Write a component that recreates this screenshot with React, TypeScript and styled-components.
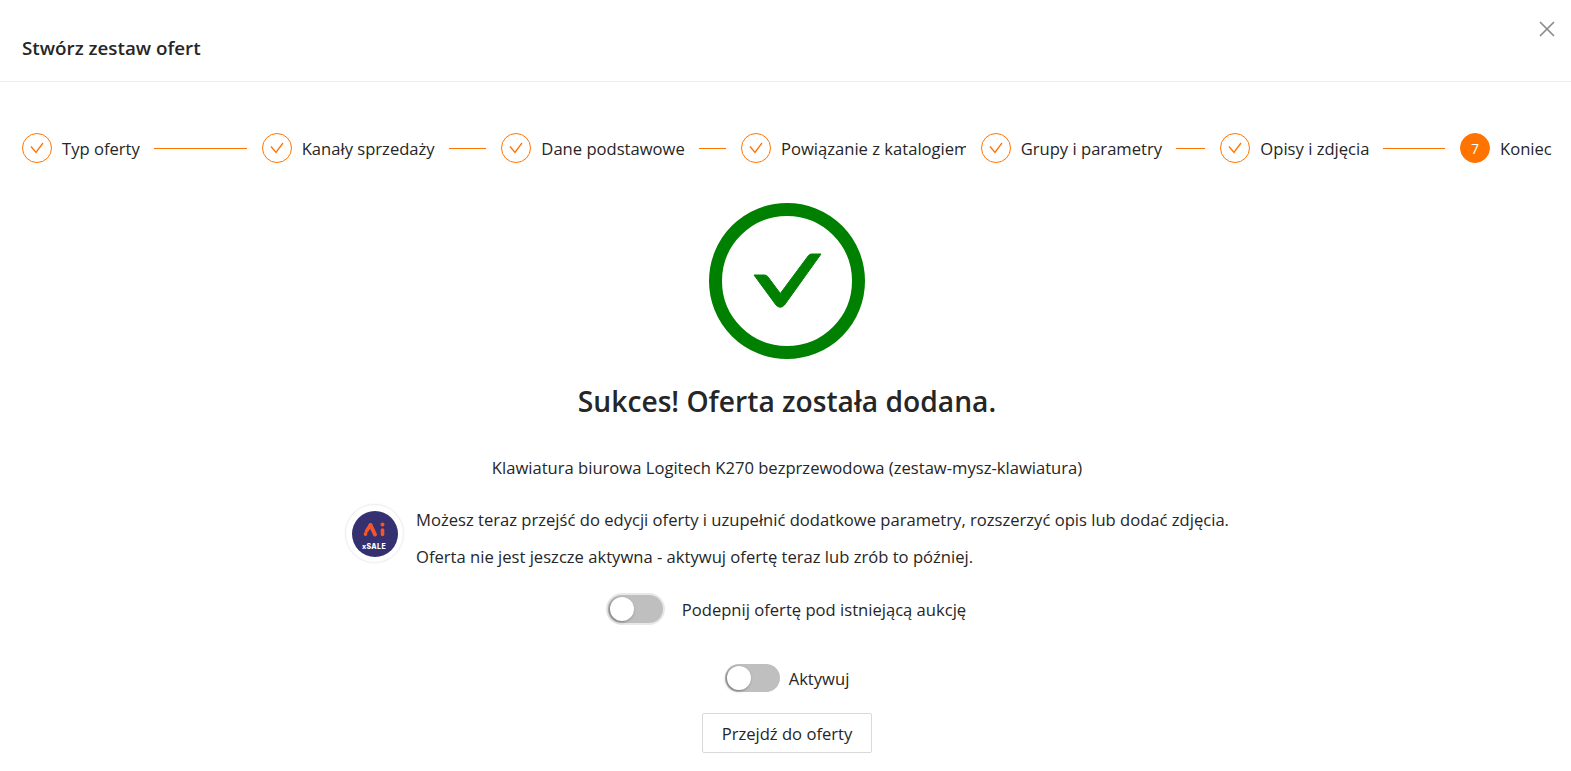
import React, { FC } from 'react'
import styled, { createGlobalStyle } from 'styled-components'
import { X } from 'lucide-react'

const steps = [
  'Typ oferty',
  'Kanały sprzedaży',
  'Dane podstawowe',
  'Powiązanie z katalogiem',
  'Grupy i parametry',
  'Opisy i zdjęcia',
]

const GlobalStyle = createGlobalStyle`
  html, body {
    margin: 0;
    padding: 0;
    background: #fff;
  }
  body {
    font-family: "Open Sans", "Liberation Sans", sans-serif;
    color: #262626;
    overflow: hidden;
  }
`

const Check: FC = () => (
  <svg width="16" height="14" viewBox="0 0 16 14" fill="none">
    <path d="M2 5.5 L7 11.5 L14 2" stroke="#ff7400" strokeWidth="1.3" />
  </svg>
)

const SuccessIcon: FC = () => (
  <svg width="156" height="156" viewBox="0 0 156 156">
    <circle cx="78" cy="78" r="71.5" fill="none" stroke="#008000" strokeWidth="13" />
    <path
      d="M45 72 H55.5 Q57.5 72 58.7 73.5 L71.3 90.5 L99.5 52.5 Q100.8 51 102.5 51 H112 L75.5 102 Q71.3 106.5 67 102 Z"
      fill="#008000"
      stroke="#008000"
      strokeWidth="1"
      strokeLinejoin="round"
    />
  </svg>
)

const Logo: FC = () => (
  <LogoWrap>
    <svg width="46" height="46" viewBox="0 0 46 46">
      <circle cx="23" cy="23" r="23" fill="#35306f" />
      <g stroke="#f4552c" strokeLinecap="round">
        <line x1="18.5" y1="14" x2="14.5" y2="20" strokeWidth="3.6" />
        <line x1="18.5" y1="14" x2="23" y2="23.5" strokeWidth="4" />
        <line x1="30.5" y1="19" x2="30.5" y2="23.5" strokeWidth="3.6" />
      </g>
      <circle cx="13.5" cy="23" r="1.9" fill="#f4552c" />
      <circle cx="30.5" cy="13.5" r="2" fill="#f4552c" />
      <text x="22" y="37.5" textAnchor="middle" fontFamily="Inter, sans-serif" fontWeight="800" fontSize="7" letterSpacing="0.4" fill="#fff">
        xSALE
      </text>
    </svg>
  </LogoWrap>
)

const App: FC = () => (
  <Page>
    <GlobalStyle />
    <Header>
      <Title>Stwórz zestaw ofert</Title>
      <CloseButton aria-label="Zamknij">
        <X size={26} strokeWidth={1.6} />
      </CloseButton>
    </Header>
    <Steps>
      {steps.map((label) => (
        <Step key={label}>
          <StepInner>
            <StepCircle>
              <Check />
            </StepCircle>
            <StepLabel>{label}</StepLabel>
            <StepLine />
          </StepInner>
        </Step>
      ))}
      <LastStep>
        <ActiveCircle>7</ActiveCircle>
        <StepLabel>Koniec</StepLabel>
      </LastStep>
    </Steps>
    <Content>
      <SuccessIcon />
      <Heading>Sukces! Oferta została dodana.</Heading>
      <OfferName>
        Klawiatura biurowa Logitech K270 bezprzewodowa (zestaw-mysz-klawiatura)
      </OfferName>
      <Assistant>
        <Logo />
        <AssistantText>
          <p>
            Możesz teraz przejść do edycji oferty i uzupełnić dodatkowe parametry, rozszerzyć opis lub dodać zdjęcia.
          </p>
          <p>Oferta nie jest jeszcze aktywna - aktywuj ofertę teraz lub zrób to później.</p>
        </AssistantText>
      </Assistant>
      <AttachRow>
        <Toggle $halo />
        <span>Podepnij ofertę pod istniejącą aukcję</span>
      </AttachRow>
      <ActivateRow>
        <Toggle />
        <span>Aktywuj</span>
      </ActivateRow>
      <GoButton>Przejdź do oferty</GoButton>
    </Content>
  </Page>
)

const Page = styled.div`
  width: 1571px;
  height: 771px;
  font-size: 16.6px;
  overflow: hidden;
`

const Header = styled.header`
  height: 67px;
  border-bottom: 1px solid #eeeeee;
  display: flex;
  align-items: center;
  padding: 14px 22px 0;
  position: relative;
`

const Title = styled.h1`
  margin: 0;
  font-size: 18.8px;
  font-weight: 600;
  color: #262626;
`

const CloseButton = styled.button`
  position: absolute;
  top: 16px;
  right: 11px;
  padding: 0;
  border: none;
  background: none;
  color: #8c8c8c;
  display: flex;
`

const Steps = styled.div`
  display: flex;
  padding: 51px 19px 0 22px;
`

const Step = styled.div`
  flex: 1 1 0;
  min-width: 0;
  padding-right: 15px;
`

const StepInner = styled.div`
  display: flex;
  align-items: center;
  overflow: hidden;
`

const LastStep = styled.div`
  flex: 0 0 92px;
  display: flex;
  align-items: center;
`

const StepCircle = styled.span`
  flex: none;
  width: 30px;
  height: 30px;
  box-sizing: border-box;
  border: 1px solid #ff7400;
  border-radius: 50%;
  display: flex;
  align-items: center;
  justify-content: center;
`

const ActiveCircle = styled(StepCircle)`
  background: #ff7400;
  color: #fff;
  font-size: 14px;
`

const StepLabel = styled.span`
  flex: none;
  margin-left: 10px;
  white-space: nowrap;
`

const StepLine = styled.span`
  flex: 1 1 0;
  min-width: 0;
  height: 1px;
  margin-left: 14px;
  background: #ff7400;
`

const Content = styled.main`
  display: flex;
  flex-direction: column;
  align-items: center;
  padding: 40px 0 0 3px;
`

const Heading = styled.h2`
  margin: 22px 0 0;
  font-size: 28.2px;
  line-height: 40px;
  font-weight: 600;
  color: #262626;
`

const OfferName = styled.div`
  margin-top: 35px;
  line-height: 24px;
`

const Assistant = styled.div`
  margin-top: 24px;
  display: flex;
  align-items: flex-start;
  gap: 12px;
`

const LogoWrap = styled.div`
  width: 59px;
  height: 59px;
  box-sizing: border-box;
  border: 1px solid #eeeeee;
  border-radius: 50%;
  box-shadow: 0 0 2px rgba(0, 0, 0, 0.08);
  display: flex;
  align-items: center;
  justify-content: center;
`

const AssistantText = styled.div`
  padding-top: 4px;
  p {
    margin: 0;
    line-height: 24px;
  }
  p + p {
    margin-top: 13px;
  }
`

const AttachRow = styled.div`
  margin-top: 26px;
  display: flex;
  align-items: center;
  gap: 19px;
`

const ActivateRow = styled.div`
  margin-top: 41px;
  display: flex;
  align-items: center;
  gap: 9px;
`

const Toggle = styled.span<{ $halo?: boolean }>`
  display: block;
  width: 55px;
  height: 28px;
  border-radius: 14px;
  background: #bfbfbf;
  position: relative;
  box-shadow: ${(p) => (p.$halo ? '0 0 0 2px #e8e8e8' : 'none')};
  &::after {
    content: '';
    position: absolute;
    top: 2px;
    left: 2px;
    width: 24px;
    height: 24px;
    border-radius: 50%;
    background: #fff;
    box-shadow: -1px 1px 3px rgba(0, 0, 0, 0.4);
  }
`

const GoButton = styled.button`
  margin-top: 21px;
  width: 170px;
  height: 40px;
  border: 1px solid #d9d9d9;
  border-radius: 2px;
  background: #fff;
  color: #262626;
  font: inherit;
`

export default App
